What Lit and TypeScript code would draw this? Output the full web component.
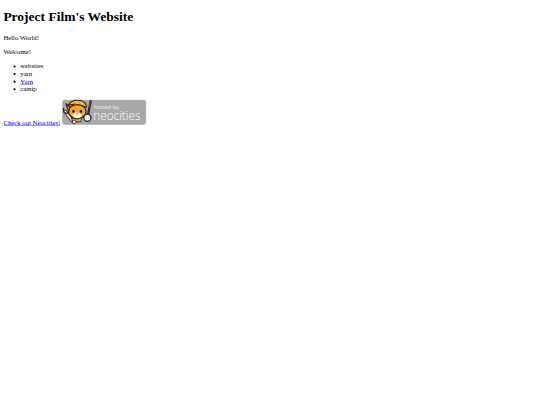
import { LitElement, html, css } from "lit";
import { customElement } from "lit/decorators.js";

@customElement("app-root")
export class AppRoot extends LitElement {
  static styles = css`
    :host {
      display: block;
      height: 405px;
      overflow: hidden;
      background: #fff;
    }
    .page {
      box-sizing: border-box;
      width: 1280px;
      padding: 21.44px 8px 8px;
      font-family: "Liberation Serif", "Times New Roman", serif;
      font-size: 16px;
      color: #000;
      transform: scale(0.421875);
      transform-origin: 0 0;
    }
    h1 { font-size: 32px; font-weight: bold; margin: 0 0 21.44px; }
    p { margin: 16px 0; }
    ul { margin: 16px 0; padding-left: 40px; list-style: disc; }
    a { color: #0000ee; text-decoration: underline; }
    .badge { width: 200px; height: 60px; display: inline-block; vertical-align: baseline; }
    .banner-label { font-family: "Open Sans", "Liberation Sans", sans-serif; fill: #fff; }
    .light { font-weight: 300; }
  `;

  render() {
    return html`
      <div class="page">
        <h1>Project Film's Website</h1>
        <p>Hello World!</p>
        <p>Welcome!</p>
        <ul>
          <li>websites</li>
          <li>yarn</li>
          <li><a href="#">Yarn</a></li>
          <li>catnip</li>
        </ul>
        <p>
          <a href="#">Check out Neocities!</a>
          <a href="#"><svg class="badge" viewBox="0 0 200 60" role="img" aria-label="hosted by neocities">
            <rect x="0.5" y="0.5" width="199" height="59" rx="7" fill="#a8a8a8" stroke="#c4c4c4"/>
            <text class="banner-label" x="76" y="22" font-size="12.5" opacity="0.85">hosted by,</text>
            <text class="banner-label light" x="74" y="49" font-size="28">neocities</text>
            <!-- wrench -->
            <path d="M7 28 L27 53" stroke="#2e2e2e" stroke-width="8" stroke-linecap="round"/>
            <path d="M7 28 L27 53" stroke="#f0f0f0" stroke-width="4" stroke-linecap="round"/>
            <path d="M3 20 L4 29 L11 33 L18 30" fill="none" stroke="#2e2e2e" stroke-width="3"/>
            <!-- paintbrush -->
            <path d="M68 4 L62 34" stroke="#2e2626" stroke-width="5.5" stroke-linecap="round"/>
            <path d="M68 4 L65 18" stroke="#8a2f3d" stroke-width="3.5" stroke-linecap="round"/>
            <circle cx="60" cy="43" r="8.5" fill="#f0efe8" stroke="#2a2a2a" stroke-width="3"/>
            <!-- cat head -->
            <ellipse cx="36" cy="28" rx="21" ry="16" fill="#f2a33c" stroke="#33261a" stroke-width="3"/>
            <path d="M18 18 L9 9 L16 30 Z" fill="#f2a33c" stroke="#33261a" stroke-width="2.5"/>
            <path d="M14 14 Q26 -3 46 3 Q58 8 58 18 Q34 7 14 14 Z" fill="#f6c12e" stroke="#33261a" stroke-width="2.6"/>
            <path d="M30 7 L33 13 M41 5 L43 12" stroke="#c9861f" stroke-width="2"/>
            <path d="M25 36 Q35 25 47 36 Q47 44 36 44 Q25 44 25 36 Z" fill="#fff4e2"/>
            <circle cx="27" cy="28" r="3" fill="#1e1e1e"/>
            <circle cx="45" cy="28" r="3" fill="#1e1e1e"/>
            <path d="M33 33 h6 l-3 3 z" fill="#b33"/>
            <path d="M22 43 Q34 50 48 43 L44 53 H26 Z" fill="#f2a33c" stroke="#33261a" stroke-width="2"/>
            <circle cx="29" cy="53" r="4.2" fill="#fff" stroke="#2e2e2e" stroke-width="2"/>
          </svg></a>
        </p>
      </div>
    `;
  }
}
